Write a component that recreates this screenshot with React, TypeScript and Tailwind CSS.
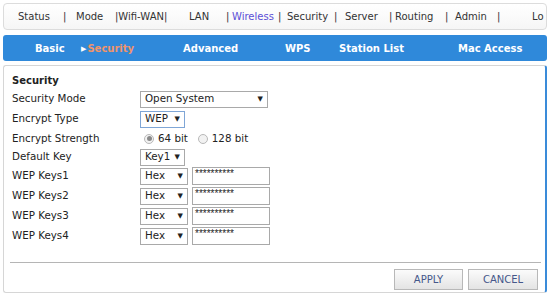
import React from "react";

// top navigation, fixed-width slots so the separators land where the router UI puts them
const topNav = [
  { label: "Status", cls: "w-[45px]" },
  { label: "|", cls: "w-[13px]" },
  { label: "Mode", cls: "w-[39px]" },
  { label: "|Wifi-WAN|", cls: "w-[74px]" },
  { label: "LAN", cls: "w-[37px]" },
  { label: "|", cls: "w-[6px]" },
  { label: "Wireless", cls: "w-[46px] text-[#5b4fd6]" },
  { label: "|", cls: "w-[9px]" },
  { label: "Security", cls: "w-[47px]" },
  { label: "|", cls: "w-[11px]" },
  { label: "Server", cls: "w-[44px]" },
  { label: "|", cls: "w-[6px]" },
  { label: "Routing", cls: "w-[50px]" },
  { label: "|", cls: "w-[10px]" },
  { label: "Admin", cls: "w-[42px]" },
  { label: "|", cls: "w-[35px]" },
  { label: "Lo", cls: "w-[13px]" },
];

const tabs = [
  { label: "Basic", cls: "w-[46px]" },
  { label: "Security", cls: "w-[102px] text-[#f0946a]", active: true },
  { label: "Advanced", cls: "w-[102px]" },
  { label: "WPS", cls: "w-[54px]" },
  { label: "Station List", cls: "w-[119px]" },
  { label: "Mac Access", cls: "w-[80px]" },
];

function FakeSelect({ value, w, focus }: { value: string; w: string; focus?: boolean }) {
  return (
    <div
      className={`${w} h-[17px] flex items-center justify-between pl-[4px] pr-[4px] bg-white border ${
        focus ? "border-[#7fa6d6]" : "border-[#a9a9a9]"
      } text-[10.3px] text-[#222]`}
    >
      <span>{value}</span>
      <span className="text-[7px] leading-none">▼</span>
    </div>
  );
}

function Radio({ checked }: { checked?: boolean }) {
  return (
    <span className="w-[10px] h-[10px] rounded-full border border-[#b8b8b8] bg-[#f2f2f2] flex items-center justify-center">
      {checked && <span className="w-[5px] h-[5px] rounded-full bg-[#8a8a8a]" />}
    </span>
  );
}

function Row({ label, h, children }: { label: string; h: string; children: React.ReactNode }) {
  return (
    <div className={`flex items-center ${h}`}>
      <div className="w-[128px] text-[10.3px] text-[#222]">{label}</div>
      <div className="flex items-center">{children}</div>
    </div>
  );
}

function KeyRow({ n }: { n: number }) {
  return (
    <Row label={`WEP Keys${n}`} h="h-[20px]">
      <FakeSelect value="Hex" w="w-[48px]" />
      <div className="ml-[4px] w-[78px] h-[18px] border border-[#a9a9a9] bg-white pl-[2px] leading-[12px] text-[10px] text-[#222] font-['Liberation_Sans',sans-serif]">
        **********
      </div>
    </Row>
  );
}

export default function App() {
  return (
    <div className="w-[550px] h-[298px] bg-white pt-[3px] px-[3px] pb-[5px] flex flex-col font-['DejaVu_Sans',sans-serif]">
      {/* Top menu */}
      <div className="h-[27px] shrink-0 border border-[#dcdcdc] rounded-[4px] bg-gradient-to-b from-white to-[#f6f6f6] flex items-center pl-[14px] overflow-hidden whitespace-nowrap text-[10px] text-[#333]">
        {topNav.map((item, i) => (
          <span key={i} className={`shrink-0 ${item.cls}`}>
            {item.label}
          </span>
        ))}
      </div>

      {/* Sub tabs */}
      <div className="mt-[5px] h-[26px] shrink-0 rounded-[3px] bg-[#2f89da] flex items-center pl-[32px] text-[10px] font-bold text-white whitespace-nowrap">
        {tabs.map((t) => (
          <span key={t.label} className={`shrink-0 ${t.cls}`}>
            {t.active && <span className="text-[7px] mr-[1px] align-[1px] text-white">▶</span>}
            {t.label}
          </span>
        ))}
      </div>

      {/* Panel */}
      <div className="mt-[4px] flex-1 border border-[#d6d6d6] border-r-2 border-r-[#3a8bd9] rounded-[3px] flex flex-col pl-[8px] pt-[5px]">
        <div className="h-[18px] flex items-center text-[10px] font-bold text-[#222]">Security</div>

        <Row label="Security Mode" h="h-[20px]">
          <FakeSelect value="Open System" w="w-[128px]" />
        </Row>
        <Row label="Encrypt Type" h="h-[20px]">
          <FakeSelect value="WEP" w="w-[45px]" focus />
        </Row>
        <Row label="Encrypt Strength" h="h-[19px]">
          <div className="flex items-center gap-[4px] pl-[4px] text-[10.3px] text-[#222]">
            <Radio checked />
            <span>64 bit</span>
            <span className="ml-[2px]" />
            <Radio />
            <span>128 bit</span>
          </div>
        </Row>
        <Row label="Default Key" h="h-[18px]">
          <FakeSelect value="Key1" w="w-[45px]" />
        </Row>
        <KeyRow n={1} />
        <KeyRow n={2} />
        <KeyRow n={3} />
        <KeyRow n={4} />

        <div className="mt-[16px] mr-[4px] ml-[-2px] h-px bg-[#b5b5b5]" />

        <div className="mt-[6px] flex justify-end gap-[5px] pr-[7px]">
          <button className="w-[69px] h-[21px] border border-[#b8b8b8] bg-gradient-to-b from-[#fbfbfb] to-[#e4e4e4] text-[10px] text-[#45578a]">
            APPLY
          </button>
          <button className="w-[70px] h-[21px] border border-[#b8b8b8] bg-gradient-to-b from-[#fbfbfb] to-[#e4e4e4] text-[10px] text-[#45578a]">
            CANCEL
          </button>
        </div>
      </div>
    </div>
  );
}
